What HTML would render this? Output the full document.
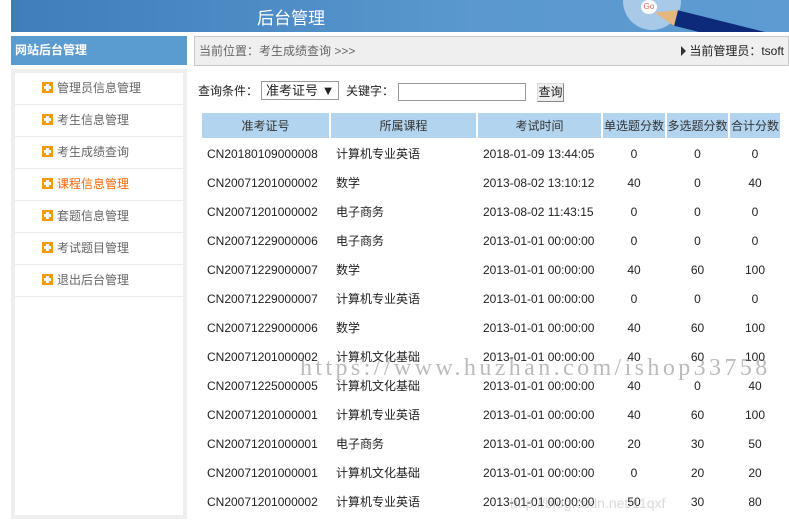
<!DOCTYPE html>
<html><head><meta charset="utf-8"><style>
*{margin:0;padding:0;box-sizing:border-box}
body{width:789px;height:523px;overflow:hidden;background:#fff;font-family:"Liberation Sans","Noto Sans CJK SC",sans-serif;font-size:12px;color:#222;position:relative}
.banner{position:absolute;left:11px;top:0;width:778px;height:32px;background:linear-gradient(90deg,#3f7dbb,#5a98cf 60%,#5d9bd2);overflow:hidden}
.banner .t{position:absolute;left:246px;top:4px;color:#fff;font-size:17px}
.go{position:absolute;left:612px;top:-28px;width:58px;height:58px;border-radius:50%;background:#a9c9e8}
.go span{position:absolute;left:18px;top:28px;width:16px;height:14px;border-radius:50%;background:#fff;color:#e65;font-size:8px;text-align:center;line-height:14px}
.pencil{position:absolute;left:665px;top:10px;width:130px;height:16px;background:#0d2a7a;transform:rotate(14deg);transform-origin:left center}
.pencil:before{content:"";position:absolute;left:-22px;top:0;border-right:22px solid #e5b77c;border-top:8px solid transparent;border-bottom:8px solid transparent}
.lh{position:absolute;left:11px;top:36px;width:176px;height:29px;background:#5a9bd0;color:#fff;font-weight:bold;font-size:12px;line-height:29px;padding-left:4px}
.side{position:absolute;left:11px;top:69px;width:176px;height:450px;background:#eee;padding:4px}
.side .in{background:#fff;height:100%}
.item{height:32px;border-bottom:1px solid #eaeaea;line-height:31px;padding-left:27px;color:#666;font-size:12px}
.item i{display:inline-block;width:11px;height:11px;background:#f90;vertical-align:-1px;margin-right:4px;position:relative}
.item i:before{content:"";position:absolute;left:4px;top:2px;width:3px;height:7px;background:#fff}
.item i:after{content:"";position:absolute;left:2px;top:4px;width:7px;height:3px;background:#fff}
.item.on{color:#f60}
.crumb{position:absolute;left:194px;top:36px;width:595px;height:30px;background:#efefef;border:1px solid #c8c8c8;line-height:28px;padding-left:4px;color:#666}
.crumb .r{position:absolute;right:4px;top:0;color:#222}
.crumb .r b{display:inline-block;border-left:5px solid #333;border-top:5px solid transparent;border-bottom:5px solid transparent;margin-right:3px;vertical-align:-1px}
.q{position:absolute;left:198px;top:80px;height:22px;line-height:22px}
.sel{position:absolute;left:261px;top:81px;width:78px;height:19px;border:1px solid #999;font-size:13px;line-height:17px;padding-left:4px;white-space:nowrap}
.kw{position:absolute;left:346px;top:81px;line-height:20px}
.inp{position:absolute;left:398px;top:83px;width:128px;height:18px;border:1px solid #999}
.btn{position:absolute;left:537px;top:83px;width:27px;height:19px;border:1px solid #888;border-top-color:#ddd;border-left-color:#ddd;background:#eee;font-size:12px;line-height:17px;text-align:center;white-space:nowrap;overflow:hidden}
table{position:absolute;left:200px;top:111px;border-collapse:separate;border-spacing:2px 2px}
th{background:#b2d4ef;font-weight:normal;height:25px;font-size:12px;color:#333}
td{height:27px;font-size:12px;text-align:center}
td.l{text-align:left;padding-left:5px}
.wm{position:absolute;left:300px;top:355px;color:rgba(120,120,120,.5);font-family:"Liberation Serif",serif;font-size:24px;letter-spacing:3.4px;white-space:nowrap}
.wm2{position:absolute;left:510px;top:495px;color:rgba(150,150,150,.35);font-size:14px}
</style></head><body>
<div class="banner"><div class="t">后台管理</div><div class="go"><span>Go</span></div><div class="pencil"></div></div>
<div class="lh">网站后台管理</div>
<div class="side"><div class="in">
<div class="item"><i></i>管理员信息管理</div>
<div class="item"><i></i>考生信息管理</div>
<div class="item"><i></i>考生成绩查询</div>
<div class="item on"><i></i>课程信息管理</div>
<div class="item"><i></i>套题信息管理</div>
<div class="item"><i></i>考试题目管理</div>
<div class="item"><i></i>退出后台管理</div>
</div></div>
<div class="crumb">当前位置：考生成绩查询 &gt;&gt;&gt;<span class="r"><b></b>当前管理员：tsoft</span></div>
<div class="q">查询条件：</div>
<div class="sel">准考证号 ▼</div>
<div class="kw">关键字：</div>
<div class="inp"></div>
<div class="btn">查询</div>
<table>
<tr><th style="width:127px">准考证号</th><th style="width:145px">所属课程</th><th style="width:123px">考试时间</th><th style="width:62px">单选题分数</th><th style="width:61px">多选题分数</th><th style="width:50px">合计分数</th></tr>
<tr><td class="l">CN20180109000008</td><td class="l">计算机专业英语</td><td class="l">2018-01-09 13:44:05</td><td>0</td><td>0</td><td>0</td></tr>
<tr><td class="l">CN20071201000002</td><td class="l">数学</td><td class="l">2013-08-02 13:10:12</td><td>40</td><td>0</td><td>40</td></tr>
<tr><td class="l">CN20071201000002</td><td class="l">电子商务</td><td class="l">2013-08-02 11:43:15</td><td>0</td><td>0</td><td>0</td></tr>
<tr><td class="l">CN20071229000006</td><td class="l">电子商务</td><td class="l">2013-01-01 00:00:00</td><td>0</td><td>0</td><td>0</td></tr>
<tr><td class="l">CN20071229000007</td><td class="l">数学</td><td class="l">2013-01-01 00:00:00</td><td>40</td><td>60</td><td>100</td></tr>
<tr><td class="l">CN20071229000007</td><td class="l">计算机专业英语</td><td class="l">2013-01-01 00:00:00</td><td>0</td><td>0</td><td>0</td></tr>
<tr><td class="l">CN20071229000006</td><td class="l">数学</td><td class="l">2013-01-01 00:00:00</td><td>40</td><td>60</td><td>100</td></tr>
<tr><td class="l">CN20071201000002</td><td class="l">计算机文化基础</td><td class="l">2013-01-01 00:00:00</td><td>40</td><td>60</td><td>100</td></tr>
<tr><td class="l">CN20071225000005</td><td class="l">计算机文化基础</td><td class="l">2013-01-01 00:00:00</td><td>40</td><td>0</td><td>40</td></tr>
<tr><td class="l">CN20071201000001</td><td class="l">计算机专业英语</td><td class="l">2013-01-01 00:00:00</td><td>40</td><td>60</td><td>100</td></tr>
<tr><td class="l">CN20071201000001</td><td class="l">电子商务</td><td class="l">2013-01-01 00:00:00</td><td>20</td><td>30</td><td>50</td></tr>
<tr><td class="l">CN20071201000001</td><td class="l">计算机文化基础</td><td class="l">2013-01-01 00:00:00</td><td>0</td><td>20</td><td>20</td></tr>
<tr><td class="l">CN20071201000002</td><td class="l">计算机专业英语</td><td class="l">2013-01-01 00:00:00</td><td>50</td><td>30</td><td>80</td></tr>
</table>
<div class="wm">https://www.huzhan.com/ishop33758</div>
<div class="wm2">http://blog.csdn.net/11qxf</div>
</body></html>
